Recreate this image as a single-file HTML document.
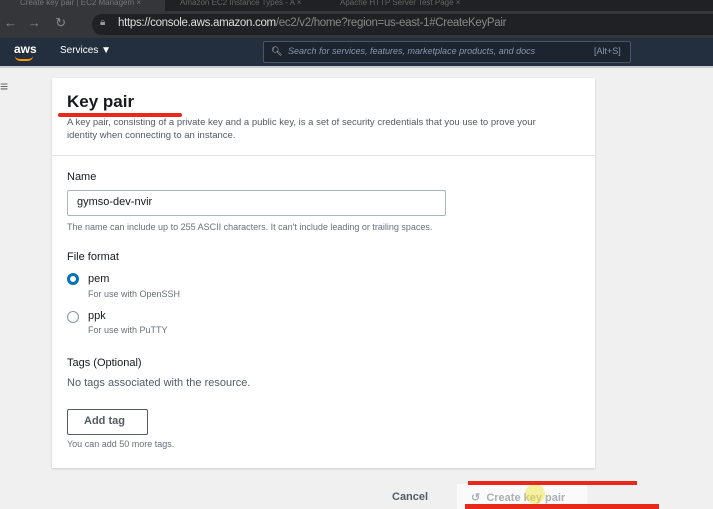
<!DOCTYPE html>
<html><head><style>
body{margin:0;width:713px;height:509px;overflow:hidden;background:#f0f0f0;font-family:"Liberation Sans",sans-serif;position:relative}
.a{position:absolute}
</style></head><body>
<div class="a" style="left:0;top:0;width:713px;height:11px;background:#202124"></div>
<div class="a" style="left:0;top:0;width:165px;height:11px;background:#35363a"></div>
<div class="a" style="left:20px;top:-2px;font-size:8px;color:#777">Create key pair | EC2 Managem  ×</div>
<div class="a" style="left:180px;top:-2px;font-size:8px;color:#666">Amazon EC2 Instance Types - A  ×</div>
<div class="a" style="left:340px;top:-2px;font-size:8px;color:#666">Apache HTTP Server Test Page  ×</div>
<div class="a" style="left:0;top:11px;width:713px;height:27px;background:#35363a"></div>
<div class="a" style="left:92px;top:14px;width:621px;height:21px;background:#202124;border-radius:10px 0 0 10px"></div>
<div class="a" style="left:4px;top:15px;font-size:13px;color:#888">←&nbsp;&nbsp;&nbsp;→&nbsp;&nbsp;&nbsp;&nbsp;↻</div>
<div class="a" style="left:100px;top:17px;font-size:10px;color:#999">🔒︎</div>
<div class="a" style="left:118px;top:17px;font-size:11.5px;color:#888;letter-spacing:-0.3px"><span style="color:#ddd">https://console.aws.amazon.com</span>/ec2/v2/home?region=us-east-1#CreateKeyPair</div>
<div class="a" style="left:0;top:38px;width:713px;height:28px;background:#232f3e"></div>
<div class="a" style="left:14px;top:42px;font-size:12px;color:#fff;font-weight:bold">aws</div>
<div class="a" style="left:15px;top:56px;width:18px;height:3px;border-bottom:2px solid #f90;border-radius:0 0 10px 10px"></div>
<div class="a" style="left:60px;top:45px;font-size:10px;color:#fff">Services ▼</div>
<div class="a" style="left:263px;top:41px;width:366px;height:20px;background:#1c2430;border:1px solid #4a5462;border-radius:2px"></div>
<div class="a" style="left:271px;top:46px;font-size:9px;color:#ccc">🔍︎</div>
<div class="a" style="left:288px;top:46px;font-size:9px;color:#8a96a6;font-style:italic">Search for services, features, marketplace products, and docs</div>
<div class="a" style="left:594px;top:46px;font-size:9px;color:#8a96a6">[Alt+S]</div>
<div class="a" style="left:0;top:66px;width:713px;height:2px;background:#c8ccd0"></div>
<div class="a" style="left:0;top:78px;font-size:14px;color:#666">≡</div>
<div class="a" style="left:52px;top:78px;width:543px;height:390px;background:#fff;box-shadow:0 1px 2px #ccc"></div>
<div class="a" style="left:52px;top:155px;width:543px;height:1px;background:#e4e4e4"></div>
<div class="a" style="left:67px;top:92px;font-size:17px;font-weight:bold;color:#16191f">Key pair</div>
<div class="a" style="left:58px;top:113px;width:124px;height:4px;background:#e8291a;border-radius:2px"></div>
<div class="a" style="left:67px;top:116px;font-size:9.5px;color:#545b64;line-height:13px;width:500px">A key pair, consisting of a private key and a public key, is a set of security credentials that you use to prove your identity when connecting to an instance.</div>
<div class="a" style="left:67px;top:171px;font-size:11px;color:#16191f">Name</div>
<div class="a" style="left:67px;top:190px;width:377px;height:24px;border:1px solid #aab7b8;border-radius:2px"></div>
<div class="a" style="left:77px;top:196px;font-size:11px;color:#16191f">gymso-dev-nvir</div>
<div class="a" style="left:67px;top:222px;font-size:9px;color:#687078">The name can include up to 255 ASCII characters. It can't include leading or trailing spaces.</div>
<div class="a" style="left:67px;top:251px;font-size:11px;color:#16191f">File format</div>
<div class="a" style="left:67px;top:273px;width:6px;height:6px;border:3px solid #0073bb;border-radius:50%"></div>
<div class="a" style="left:88px;top:273px;font-size:11px;color:#16191f">pem</div>
<div class="a" style="left:88px;top:289px;font-size:9px;color:#687078">For use with OpenSSH</div>
<div class="a" style="left:67px;top:311px;width:10px;height:10px;border:1px solid #8a9399;border-radius:50%"></div>
<div class="a" style="left:88px;top:310px;font-size:11px;color:#16191f">ppk</div>
<div class="a" style="left:88px;top:325px;font-size:9px;color:#687078">For use with PuTTY</div>
<div class="a" style="left:67px;top:357px;font-size:11px;color:#16191f">Tags (Optional)</div>
<div class="a" style="left:67px;top:377px;font-size:11px;color:#545b64">No tags associated with the resource.</div>
<div class="a" style="left:67px;top:409px;width:79px;height:24px;border:1px solid #545b64;border-radius:2px"></div>
<div class="a" style="left:84px;top:415px;font-size:11px;font-weight:bold;color:#545b64">Add tag</div>
<div class="a" style="left:67px;top:439px;font-size:9px;color:#687078">You can add 50 more tags.</div>
<div class="a" style="left:392px;top:491px;font-size:11px;font-weight:bold;color:#545b64">Cancel</div>
<div class="a" style="left:457px;top:484px;width:130px;height:25px;background:#fafafa"></div>
<div class="a" style="left:471px;top:491px;font-size:11px;font-weight:bold;color:#aab0b5">↺&nbsp;&nbsp;Create key pair</div>
<div class="a" style="left:525px;top:484px;width:20px;height:20px;border-radius:50%;background:rgba(240,230,60,.5)"></div>
<div class="a" style="left:468px;top:481px;width:169px;height:4px;background:#e8291a"></div>
<div class="a" style="left:465px;top:504px;width:194px;height:5px;background:#e8291a"></div>
</body></html>
